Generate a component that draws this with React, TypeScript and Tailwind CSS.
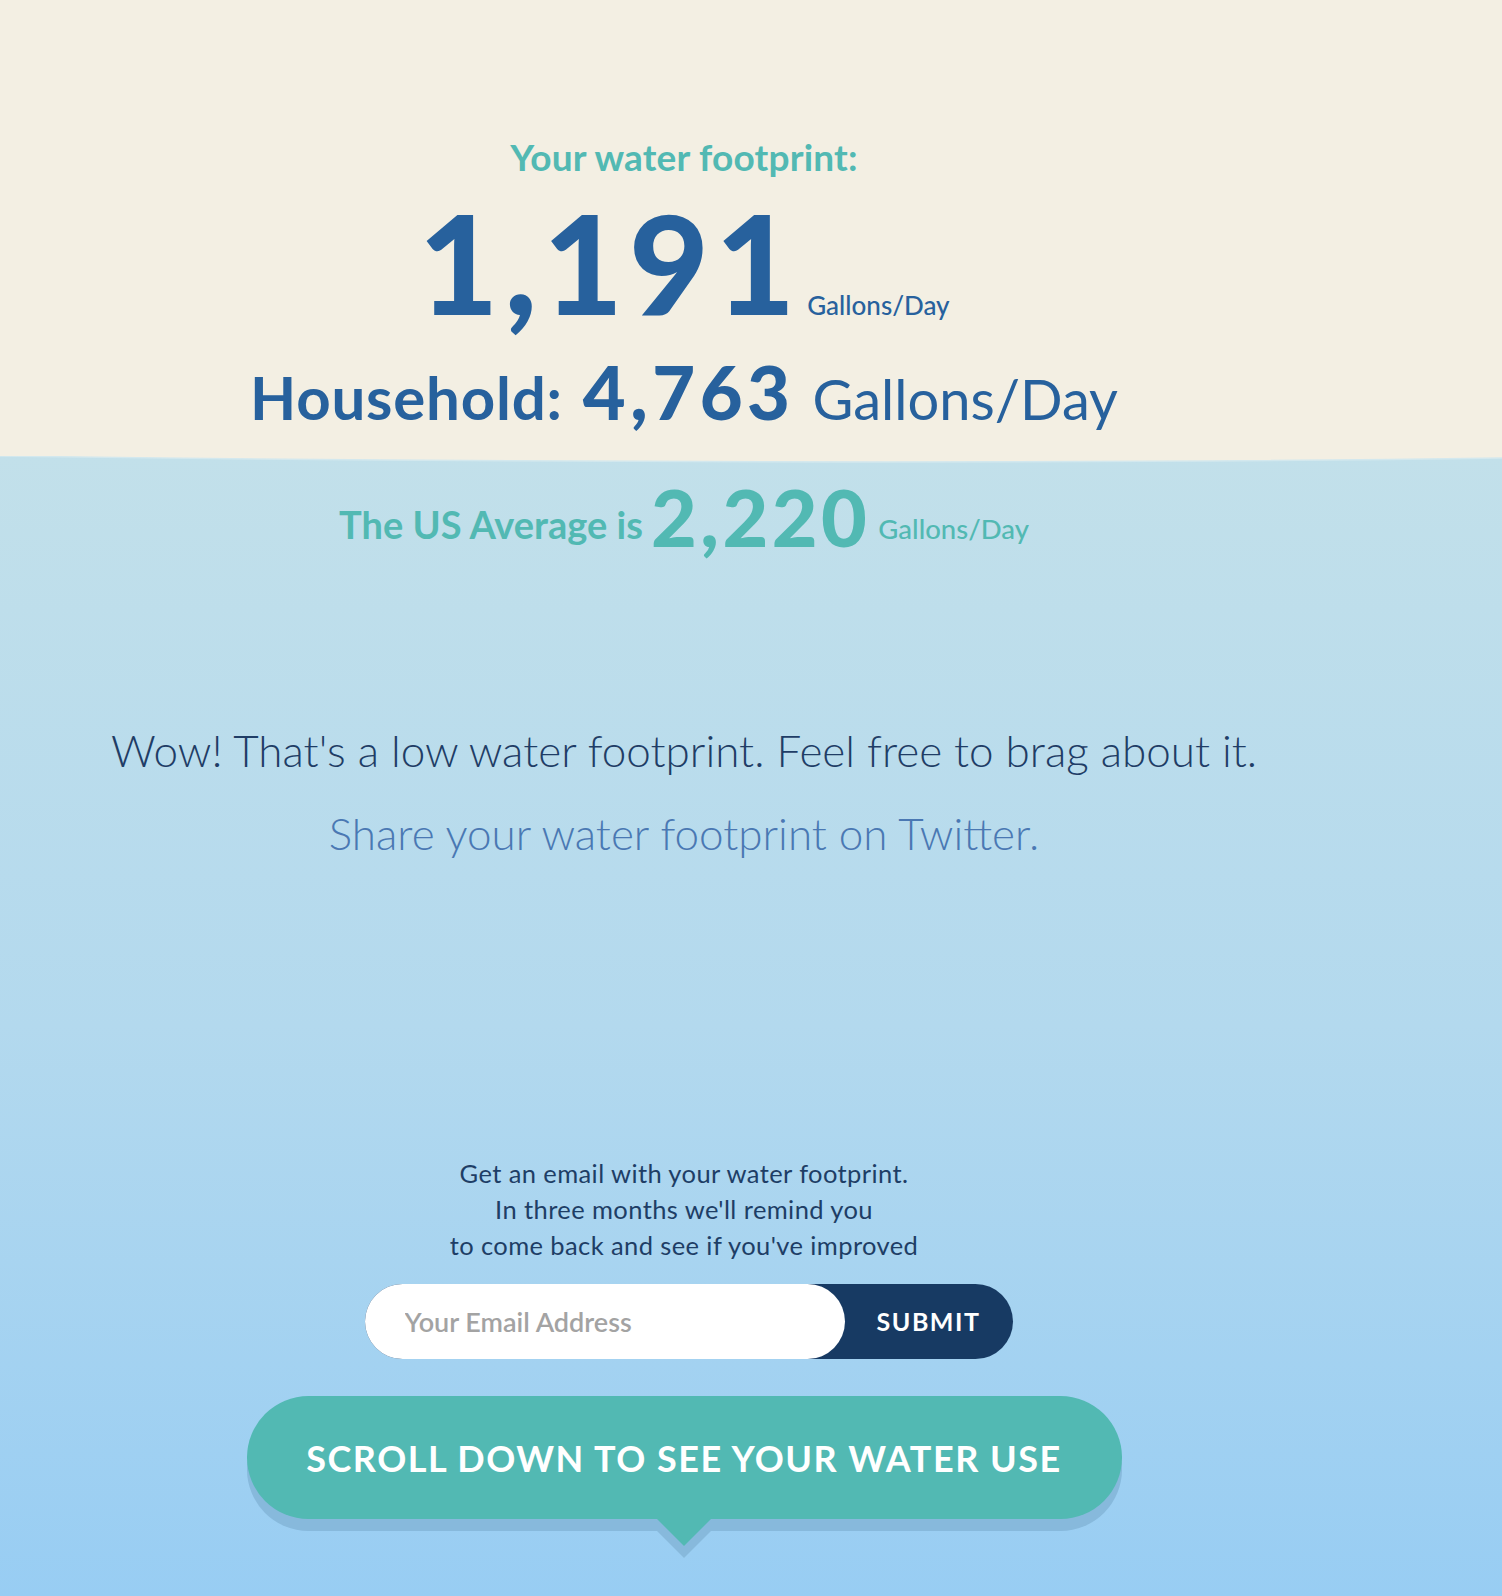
import React from "react";

const font = { fontFamily: "Lato, 'Noto Sans', sans-serif" };

/* ── Top: personal + household footprint ───────────────────── */

function Footprint() {
  return (
    <section className="h-[456px] bg-[#f3efe3]">
      <div className="w-[1368px] pt-[137px] flex flex-col items-center">
        <h2 className="text-[37px] leading-[40px] font-bold text-[#52b9b3] tracking-[0.2px]">
          Your water footprint:
        </h2>
        <div className="mt-[16px] flex items-baseline gap-[6px] text-[#27619d]">
          <span className="text-[138px] leading-none font-black tracking-[6px]">1,191</span>
          <span className="text-[26px] leading-none font-medium">Gallons/Day</span>
        </div>
        <div className="mt-[24px] flex items-baseline text-[#27619d]">
          <span className="text-[60px] leading-none font-bold tracking-[0.8px]">Household:</span>
          <span className="ml-[20px] text-[74px] leading-none font-black tracking-[4.5px]">4,763</span>
          <span className="ml-[18px] text-[56px] leading-none font-normal">Gallons/Day</span>
        </div>
      </div>
    </section>
  );
}

/* ── Bottom: average, message, email, scroll prompt ──────────── */

function Results() {
  return (
    <section className="relative h-[1140px] bg-gradient-to-b from-[#c2e0ea] via-[#b3d9ee] to-[#98cdf3]">
      <svg
        width="1502"
        height="10"
        viewBox="0 0 1502 10"
        className="absolute left-0 top-0"
        preserveAspectRatio="none"
      >
        <path d="M0 0 H1502 V2 C1150 7 600 8 0 0 Z" fill="#f3efe3" />
        <path d="M1502 2 C1150 7 600 8 0 0" fill="none" stroke="#d3e8ee" strokeWidth="1.5" />
      </svg>
      <div className="w-[1368px] pt-[13px] flex flex-col items-center text-center">
        <div className="flex items-baseline text-[#52b9b3]">
          <span className="text-[38px] leading-none font-bold">The US Average is</span>
          <span className="ml-[8px] text-[79px] leading-none font-black tracking-[3.5px] translate-y-[8px]">
            2,220
          </span>
          <span className="ml-[8px] text-[27.5px] leading-none font-medium">Gallons/Day</span>
        </div>

        <p className="mt-[180px] text-[44px] leading-[44px] font-light text-[#1f3d66]">
          Wow! That's a low water footprint. Feel free to brag about it.
        </p>
        <a className="mt-[39px] text-[44px] leading-[44px] font-light text-[#4a78b3] cursor-pointer">
          Share your water footprint on Twitter.
        </a>

        <p className="mt-[300px] text-[25.5px] leading-[36px] tracking-[0.4px] text-[#1e3e66]">
          Get an email with your water footprint.
          <br />
          In three months we'll remind you
          <br />
          to come back and see if you've improved
        </p>

        <form className="mt-[21px] ml-[9px] w-[648px] h-[75px] rounded-full bg-[#173a63] flex">
          <input
            type="email"
            placeholder="Your Email Address"
            className="w-[480px] h-full rounded-full bg-white pl-[40px] text-[27px] font-semibold text-[#333] placeholder:text-[#a3a3a3] outline-none"
            style={font}
          />
          <button
            type="button"
            className="flex-1 text-[25px] font-bold tracking-[1.5px] text-white"
            style={font}
          >
            SUBMIT
          </button>
        </form>

        <div className="relative mt-[37px]">
          <button
            type="button"
            className="w-[875px] h-[123px] rounded-full bg-[#52b9b3] shadow-[0_12px_0_#87b9dc] text-[36px] font-bold tracking-[1.5px] text-white"
            style={font}
          >
            SCROLL DOWN TO SEE YOUR WATER USE
          </button>
          <svg
            width="56"
            height="40"
            viewBox="0 0 56 40"
            className="absolute left-1/2 -translate-x-1/2 top-[122px]"
          >
            <polygon points="0,12 56,12 28,40" fill="#87b9dc" />
            <polygon points="0,0 56,0 28,28" fill="#52b9b3" />
          </svg>
        </div>
      </div>
    </section>
  );
}

export default function App() {
  return (
    <div className="w-[1502px] min-h-[1596px] overflow-hidden" style={font}>
      <Footprint />
      <Results />
    </div>
  );
}
